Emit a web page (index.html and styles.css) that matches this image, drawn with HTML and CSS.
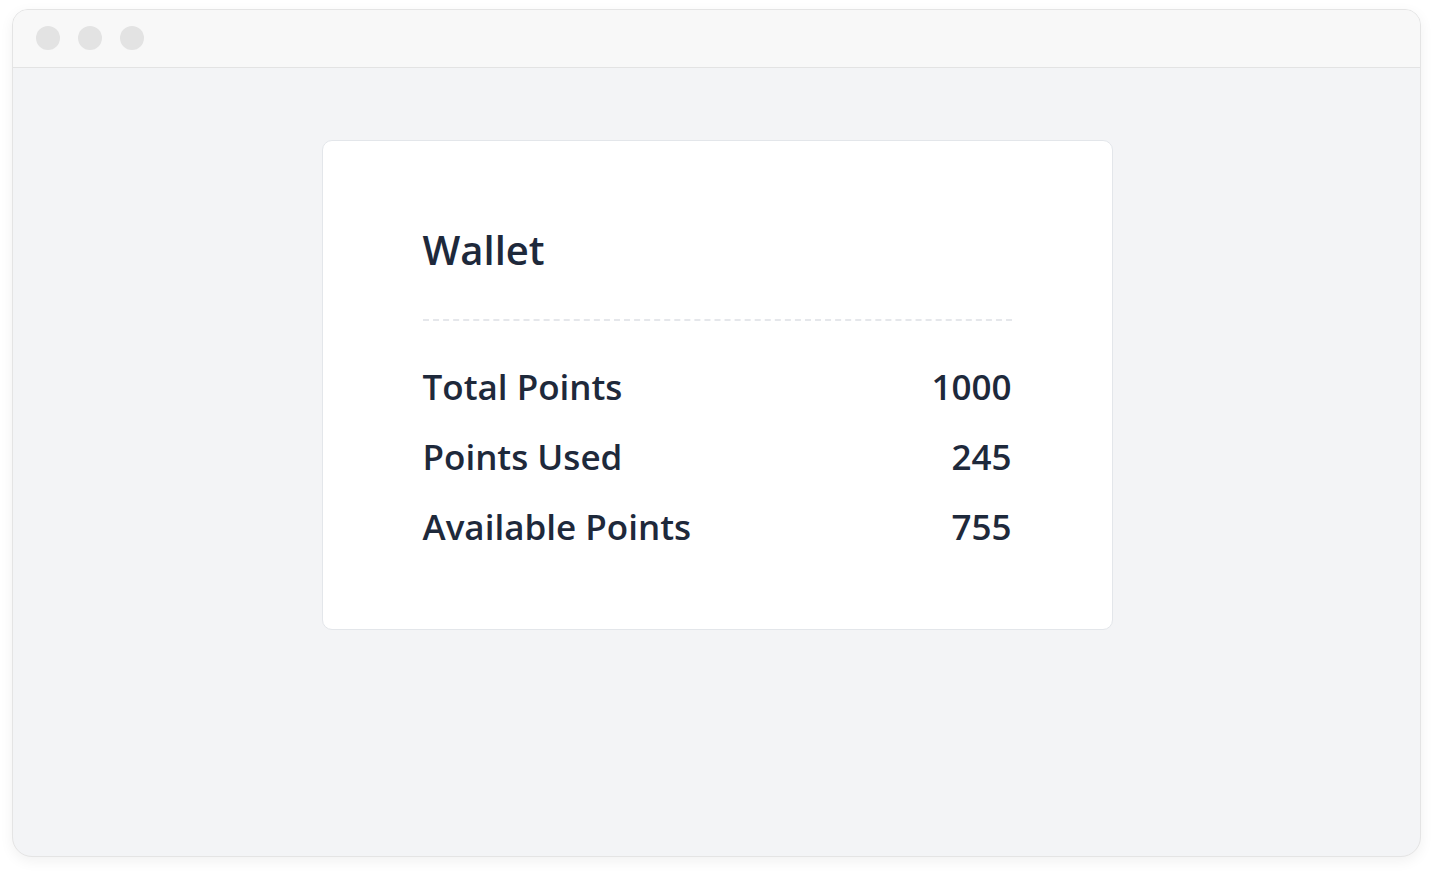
FILE: index.html
```html
<!DOCTYPE html>
<html lang="en">
<head>
<meta charset="utf-8">
<title>Wallet</title>
<link rel="stylesheet" href="styles.css">
</head>
<body>
  <div class="window">
    <div class="titlebar">
      <span class="dot"></span>
      <span class="dot"></span>
      <span class="dot"></span>
    </div>
    <div class="content">
      <div class="card">
        <h1 class="title">Wallet</h1>
        <div class="divider"></div>
        <div class="rows">
          <div class="row"><span>Total Points</span><span>1000</span></div>
          <div class="row"><span>Points Used</span><span>245</span></div>
          <div class="row"><span>Available Points</span><span>755</span></div>
        </div>
      </div>
    </div>
  </div>
</body>
</html>
```
FILE: styles.css
```css
* { box-sizing: border-box; }
html, body { margin: 0; padding: 0; }
body {
  background: #ffffff;
  font-family: "Open Sans", "Noto Sans", sans-serif;
  width: 1434px;
  height: 872px;
  overflow: hidden;
}
.window {
  margin: 9px 0 0 12px;
  width: 1409px;
  height: 848px;
  border: 1px solid #e4e4e4;
  border-radius: 16px 16px 20px 20px;
  background: #f3f4f6;
  overflow: hidden;
  box-shadow: 0 4px 14px rgba(0, 0, 0, 0.06);
  display: flex;
  flex-direction: column;
}
.titlebar {
  height: 58px;
  flex: none;
  background: #f8f8f8;
  border-bottom: 1px solid #e3e3e3;
  display: flex;
  align-items: center;
  gap: 18px;
  padding-left: 23px;
  padding-bottom: 1px;
}
.dot {
  width: 24px;
  height: 24px;
  border-radius: 50%;
  background: #e3e3e3;
}
.content {
  padding-top: 72px;
  display: flex;
  justify-content: center;
}
.card {
  width: 791px;
  height: 490px;
  background: #ffffff;
  border: 1px solid #e3e6ea;
  border-radius: 10px;
  padding: 85px 100px 0 100px;
  color: #1e293b;
  margin-left: 1px;
}
.title {
  margin: 0;
  font-size: 40px;
  line-height: 48px;
  font-weight: 600;
}
.divider {
  margin-top: 45px;
  border-top: 2px dashed #e5e7eb;
}
.rows {
  margin-top: 39px;
  display: flex;
  flex-direction: column;
  gap: 16px;
}
.row {
  display: flex;
  justify-content: space-between;
  font-size: 35px;
  line-height: 54px;
  font-weight: 600;
}
```
